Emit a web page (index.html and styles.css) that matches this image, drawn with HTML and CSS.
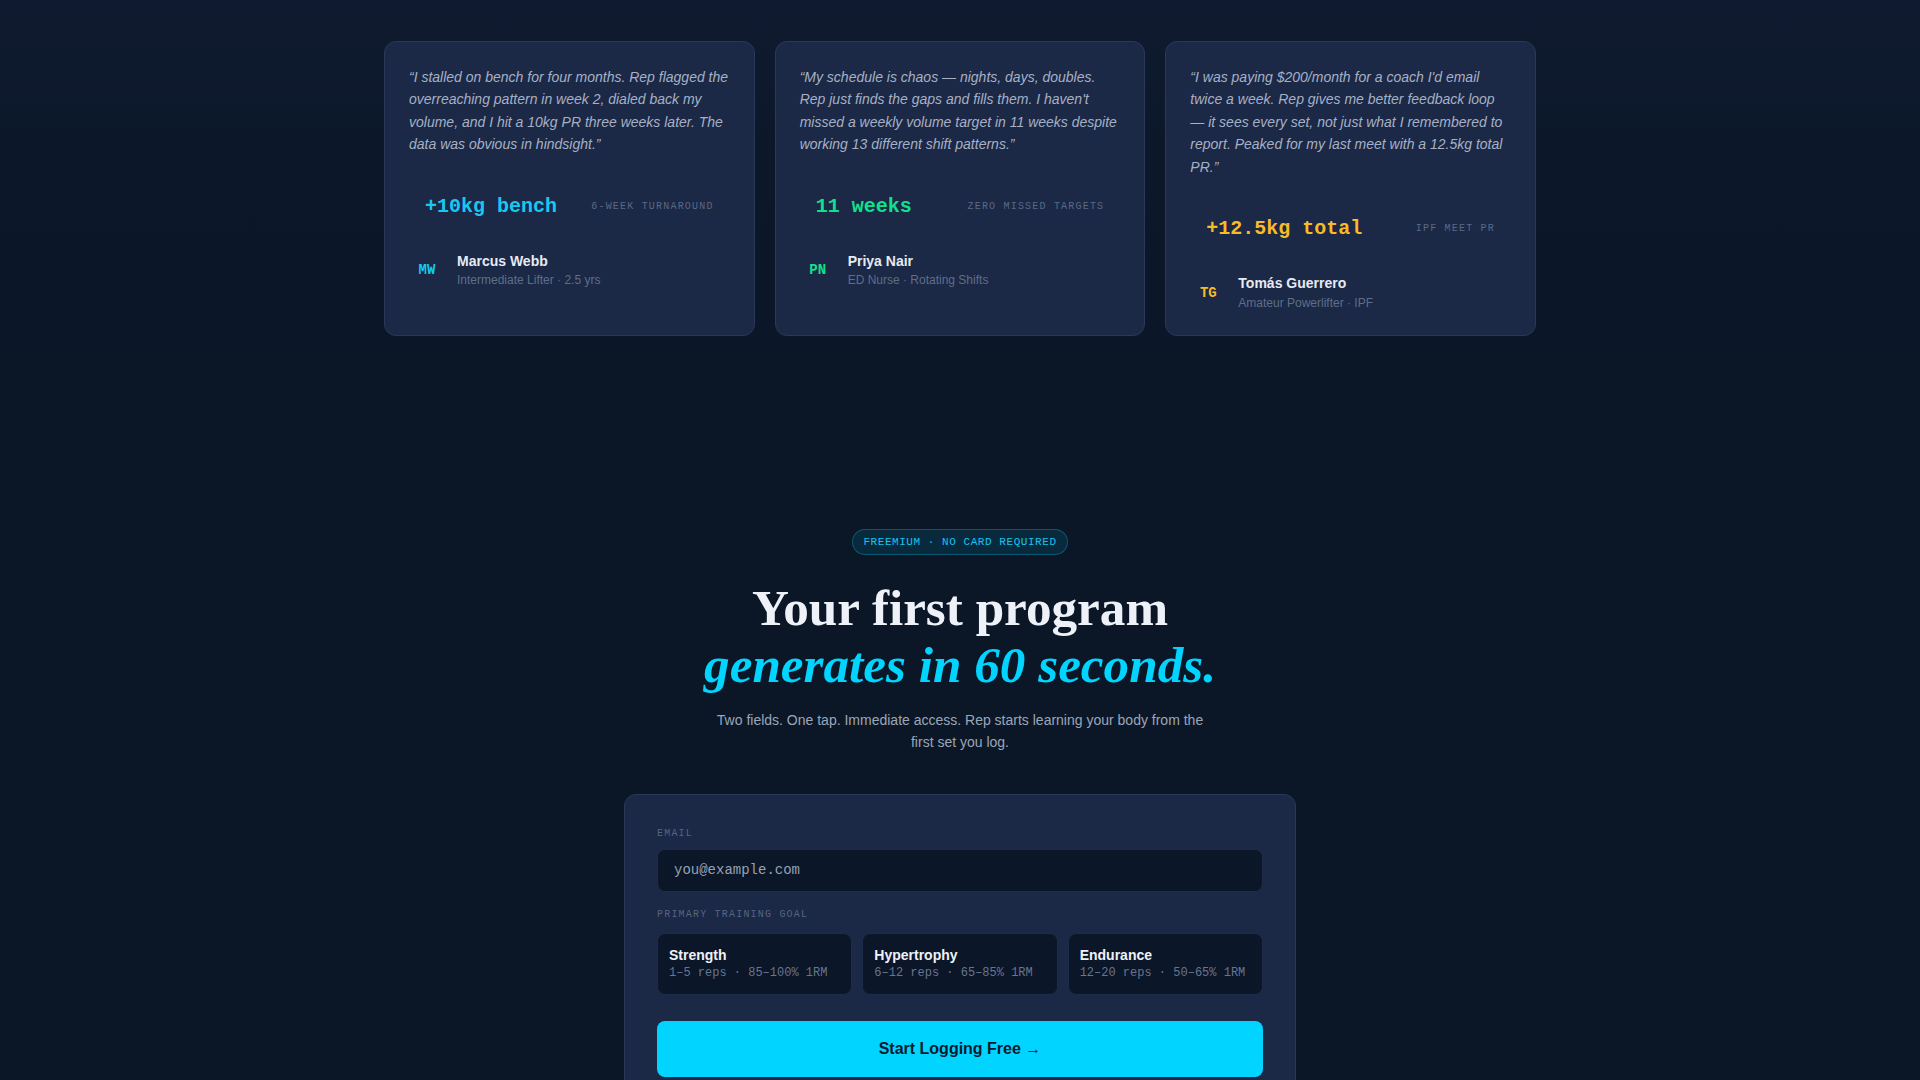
FILE: index.html
```html
<!DOCTYPE html>
<html lang="en">

<head>
    <meta charset="UTF-8" />
    <meta name="viewport" content="width=device-width, initial-scale=1.0" />
    <title>Rep — Start Logging</title>
    <link rel="stylesheet" href="styles.css">
</head>

<body>
    <!-- testimonials -->
    <section class="testimonials">
        <div class="card-grid">
            <div class="t-card">
                <p class="quote">“I stalled on bench for four months. Rep flagged the overreaching pattern in week 2, dialed back my volume, and I hit a 10kg PR three weeks later. The data was obvious in hindsight.”</p>
                <div class="stat">
                    <span class="stat-value cyan">+10kg bench</span>
                    <span class="stat-label">6-week turnaround</span>
                </div>
                <div class="author">
                    <div class="avatar cyan">MW</div>
                    <div>
                        <div class="author-name">Marcus Webb</div>
                        <div class="author-role">Intermediate Lifter · 2.5 yrs</div>
                    </div>
                </div>
            </div>

            <div class="t-card">
                <p class="quote">“My schedule is chaos — nights, days, doubles. Rep just finds the gaps and fills them. I haven't missed a weekly volume target in 11 weeks despite working 13 different shift patterns.”</p>
                <div class="stat">
                    <span class="stat-value green">11 weeks</span>
                    <span class="stat-label">Zero missed targets</span>
                </div>
                <div class="author">
                    <div class="avatar green">PN</div>
                    <div>
                        <div class="author-name">Priya Nair</div>
                        <div class="author-role">ED Nurse · Rotating Shifts</div>
                    </div>
                </div>
            </div>

            <div class="t-card">
                <p class="quote">“I was paying $200/month for a coach I'd email twice a week. Rep gives me better feedback loop — it sees every set, not just what I remembered to report. Peaked for my last meet with a 12.5kg total PR.”</p>
                <div class="stat">
                    <span class="stat-value gold">+12.5kg total</span>
                    <span class="stat-label">IPF meet PR</span>
                </div>
                <div class="author">
                    <div class="avatar gold">TG</div>
                    <div>
                        <div class="author-name">Tomás Guerrero</div>
                        <div class="author-role">Amateur Powerlifter · IPF</div>
                    </div>
                </div>
            </div>
        </div>
    </section>

    <!-- signup -->
    <section class="cta">
        <span class="badge">Freemium · No card required</span>
        <h2 class="cta-title">Your first program<br><em>generates in 60 seconds.</em></h2>
        <p class="cta-sub">Two fields. One tap. Immediate access. Rep starts learning your body from the first set you log.</p>

        <form class="signup" id="signupForm">
            <div class="field">
                <label class="field-label" for="email">Email</label>
                <input type="email" id="email" class="field-input" placeholder="you@example.com" />
            </div>
            <div class="field">
                <div class="field-label">Primary training goal</div>
                <div class="goals">
                    <div class="goal">
                        <div class="goal-name">Strength</div>
                        <div class="goal-range">1–5 reps · 85–100% 1RM</div>
                    </div>
                    <div class="goal">
                        <div class="goal-name">Hypertrophy</div>
                        <div class="goal-range">6–12 reps · 65–85% 1RM</div>
                    </div>
                    <div class="goal">
                        <div class="goal-name">Endurance</div>
                        <div class="goal-range">12–20 reps · 50–65% 1RM</div>
                    </div>
                </div>
            </div>
            <button type="submit" class="submit-btn">Start Logging Free →</button>
        </form>
    </section>
</body>

</html>
```

FILE: styles.css
```css
body {
    margin: 0;
    font-family: 'Liberation Sans', Arial, sans-serif;
    background: linear-gradient(#0f1a30 0, #0c182a 140px, #0b1727 420px);
    background-color: #0b1727;
    color: #e2e8f0;
    min-height: 100vh;
}

/* testimonials */
.testimonials {
    padding: 41px 24px 96px;
}

.card-grid {
    max-width: 1152px;
    margin: 0 auto;
    display: grid;
    grid-template-columns: repeat(3, 1fr);
    gap: 20px;
}

.t-card {
    background-color: #1b2846;
    border: 1px solid #2a3957;
    border-radius: 12px;
    padding: 24px;
}

.quote {
    margin: 0;
    font-size: 14px;
    line-height: 1.6;
    font-style: italic;
    color: #a6b1c5;
}

.stat {
    display: flex;
    justify-content: space-between;
    align-items: center;
    padding: 16px;
    margin: 23px 0 17px;
}

.stat-value {
    font-family: 'Liberation Mono', monospace;
    font-weight: bold;
    font-size: 20px;
    line-height: 24px;
}

.stat-label {
    font-family: 'Liberation Mono', monospace;
    font-size: 10px;
    letter-spacing: 0.12em;
    text-transform: uppercase;
    color: #5a6984;
}

.cyan {
    color: #18c8f2;
}

.green {
    color: #12e08c;
}

.gold {
    color: #f8bb25;
}

.author {
    display: flex;
    align-items: center;
    gap: 12px;
}

.avatar {
    width: 36px;
    height: 36px;
    display: flex;
    align-items: center;
    justify-content: center;
    font-family: 'Liberation Mono', monospace;
    font-weight: bold;
    font-size: 14px;
}

.author-name {
    font-size: 14px;
    line-height: 1.4;
    font-weight: bold;
    color: #e6ebf3;
}

.author-role {
    font-size: 12px;
    line-height: 1.4;
    color: #5f6e88;
    margin-top: 1px;
}

/* signup */
.cta {
    padding: 97px 24px 60px;
    display: flex;
    flex-direction: column;
    align-items: center;
    text-align: center;
}

.badge {
    font-family: 'Liberation Mono', monospace;
    font-size: 11px;
    line-height: 16px;
    letter-spacing: 0.05em;
    text-transform: uppercase;
    color: #14c4ee;
    background-color: rgba(0, 212, 255, 0.1);
    border: 1px solid rgba(0, 212, 255, 0.28);
    border-radius: 999px;
    padding: 4px 10px;
}

.cta-title {
    margin: 25px 0 16px;
    font-family: 'Liberation Serif', 'Times New Roman', serif;
    font-weight: bold;
    font-size: 51.2px;
    line-height: 1.1;
    color: #eef2f8;
}

.cta-title em {
    color: #00d4ff;
}

.cta-sub {
    margin: 0;
    max-width: 500px;
    font-size: 14px;
    line-height: 1.6;
    color: #9ba6b8;
}

.signup {
    box-sizing: border-box;
    width: 100%;
    max-width: 672px;
    margin-top: 40px;
    background-color: #1b2846;
    border: 1px solid #2a3957;
    border-radius: 12px;
    padding: 32px;
    text-align: left;
}

.field {
    margin-bottom: 16px;
}

.field-label {
    display: block;
    font-family: 'Liberation Mono', monospace;
    font-size: 10px;
    line-height: 14px;
    letter-spacing: 0.12em;
    text-transform: uppercase;
    color: #56657f;
    margin-bottom: 8px;
}

.field-input {
    box-sizing: border-box;
    width: 100%;
    padding: 12px 16px;
    font-family: 'Liberation Mono', monospace;
    font-size: 14px;
    line-height: 17px;
    color: #e2e8f0;
    background-color: #0b1628;
    border: 1px solid #1f2c48;
    border-radius: 8px;
    outline: none;
}

.field-input::placeholder {
    color: #96a1b2;
}

.goals {
    display: grid;
    grid-template-columns: repeat(3, 1fr);
    gap: 10px;
    margin-top: 11px;
}

.goal {
    background-color: #0b1628;
    border: 1px solid #1f2c48;
    border-radius: 8px;
    padding: 12px 11px;
}

.goal-name {
    font-size: 14px;
    line-height: 1.4;
    font-weight: bold;
    color: #eef2f8;
}

.goal-range {
    font-family: 'Liberation Mono', monospace;
    font-size: 12px;
    line-height: 1.4;
    color: #687590;
}

.submit-btn {
    width: 100%;
    margin-top: 10px;
    padding: 18px;
    border: none;
    border-radius: 8px;
    background-color: #00d4ff;
    color: #0a1a2e;
    font-family: 'Liberation Sans', Arial, sans-serif;
    font-size: 16px;
    line-height: 20px;
    font-weight: bold;
    cursor: pointer;
}
```
